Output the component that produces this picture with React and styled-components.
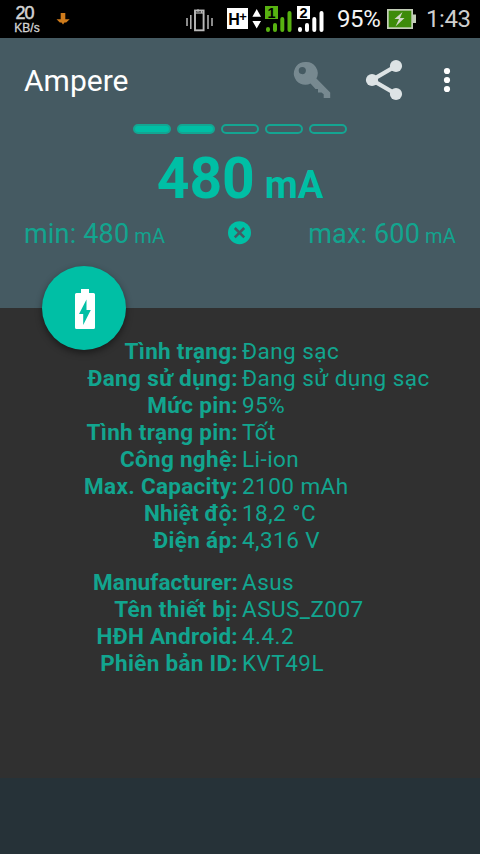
import React from 'react';
import styled, {createGlobalStyle} from 'styled-components';

const colors = {
  header: '#455a62',
  body: '#303030',
  footer: '#263238',
  accent: '#00bfa5',
  text: '#12a58f',
  light: '#fefefe',
};

const GlobalStyle = createGlobalStyle`
  body {
    margin: 0;
    background: ${colors.body};
    font-family: Roboto, 'Noto Sans', sans-serif;
  }

  svg {
    display: block;
    flex: none;
  }
`;

const Screen = styled.div`
  display: flex;
  flex-direction: column;
  width: 480px;
  height: 854px;
  overflow: hidden;
`;

const StatusBar = styled.div`
  display: flex;
  align-items: flex-start;
  height: 38px;
  background: #000;
`;

const Speed = styled.div`
  width: 44px;
  margin-left: 5px;
  padding-top: 3px;
  text-align: center;
  font-family: 'Liberation Sans', sans-serif;
  color: #d4d4d4;
`;

const SpeedValue = styled.div`
  height: 19px;
  padding-right: 5px;
  font-size: 18px;
  line-height: 20px;
  letter-spacing: -1px;
  -webkit-text-stroke: 0.5px #d4d4d4;
`;

const SpeedUnit = styled.div`
  font-size: 12px;
  line-height: 13px;
  -webkit-text-stroke: 0.3px #d4d4d4;
`;

const StatusIcon = styled.svg`
  margin-left: ${props => props.$gap}px;
`;

const StatusText = styled.div`
  margin-left: ${props => props.$gap}px;
  width: ${props => props.$width}px;
  font-size: 24px;
  line-height: 38px;
  letter-spacing: -0.4px;
  white-space: nowrap;
  color: ${props => props.$color};
`;

const Header = styled.header`
  position: relative;
  height: 270px;
  background: ${colors.header};
`;

const Toolbar = styled.div`
  display: flex;
  align-items: center;
  height: 84px;
  padding-left: 24px;
`;

const Title = styled.h1`
  flex: 1;
  margin: 0;
  font-size: 30px;
  font-weight: 400;
  color: ${colors.light};
`;

const Levels = styled.div`
  display: flex;
  justify-content: center;
  gap: 6px;
  padding-top: 2px;
`;

const Level = styled.div`
  box-sizing: border-box;
  width: 38px;
  height: 10px;
  border: 2px solid #14a592;
  border-radius: 5px;
  background: ${props => (props.$on ? colors.accent : 'transparent')};
`;

const Current = styled.div`
  height: 87px;
  text-align: center;
  font-size: 57px;
  font-weight: 700;
  line-height: 90px;
  color: ${colors.accent};
`;

const CurrentUnit = styled.span`
  margin-left: 10px;
  font-size: 38px;
`;

const Range = styled.div`
  display: flex;
  justify-content: space-between;
  align-items: flex-start;
  height: 26px;
  padding: 0 24px;
`;

const Limit = styled.div`
  width: 148px;
  text-align: ${props => props.$align};
  font-size: 27px;
  line-height: 26px;
  letter-spacing: 0.17px;
  white-space: nowrap;
  color: ${colors.text};
`;

const LimitUnit = styled.span`
  margin-left: 5px;
  font-size: 20px;
`;

const Fab = styled.div`
  position: absolute;
  left: 42px;
  bottom: -42px;
  display: flex;
  justify-content: center;
  align-items: center;
  box-sizing: border-box;
  width: 84px;
  height: 84px;
  padding: 2px 0 0 2px;
  border-radius: 50%;
  background: ${colors.accent};
  box-shadow: 0 3px 7px rgba(0, 0, 0, 0.45);
`;

const Details = styled.main`
  flex: 1;
  padding-top: 30px;
  background: ${colors.body};
`;

const Group = styled.div`
  margin-bottom: 15px;
`;

const Row = styled.div`
  display: flex;
  height: 27px;
  font-size: 22.5px;
  line-height: 27px;
  white-space: nowrap;
  color: ${colors.text};
`;

const Label = styled.div`
  width: 238px;
  margin-right: 4px;
  text-align: right;
  font-weight: 700;
  letter-spacing: ${props => props.$spacing}px;
`;

const Value = styled.div`
  letter-spacing: 0.45px;
`;

const Footer = styled.footer`
  height: 76px;
  background: ${colors.footer};
`;

const battery = [
  ['Tình trạng:', 'Đang sạc'],
  ['Đang sử dụng:', 'Đang sử dụng sạc', 0.36],
  ['Mức pin:', '95%'],
  ['Tình trạng pin:', 'Tốt'],
  ['Công nghệ:', 'Li-ion'],
  ['Max. Capacity:', '2100 mAh'],
  ['Nhiệt độ:', '18,2 °C', 0.1],
  ['Điện áp:', '4,316 V'],
];

const device = [
  ['Manufacturer:', 'Asus', 0.1],
  ['Tên thiết bị:', 'ASUS_Z007'],
  ['HĐH Android:', '4.4.2'],
  ['Phiên bản ID:', 'KVT49L'],
];

const Signal = ({sim, color, gap}) => (
  <StatusIcon $gap={gap} width="28" height="38" viewBox="0 0 28 38">
    <rect x="0" y="6" width="13" height="13" fill={color} />
    <text x="6.5" y="17.5" textAnchor="middle" fontFamily="Liberation Sans" fontWeight="700" fontSize="14.5" fill="#000">
      {sim}
    </text>
    <g stroke={color} strokeWidth="4" strokeLinecap="round">
      <path d="M3 29v1M10 25v5M17.3 19v11M24.5 13v17" />
    </g>
  </StatusIcon>
);

const Status = () => (
  <StatusBar>
    <Speed>
      <SpeedValue>20</SpeedValue>
      <SpeedUnit>KB/s</SpeedUnit>
    </Speed>
    <StatusIcon $gap={7} width="14" height="38" viewBox="56 0 14 38">
      <path d="M60.700 13h4.600v6.200h4.400l-3.500 3.300h-1.700l-1.500 2-1.500-2h-1.700l-3.300-3.300h4.200z" fill="#cf7b1b" />
    </StatusIcon>
    <StatusIcon $gap={115} width="28" height="38" viewBox="185 0 28 38">
      <g fill="none" stroke="#b9b9b9">
        <rect x="195" y="10.500" width="8.600" height="19.800" strokeWidth="1.900" />
        <path d="M195 13h9" strokeWidth="1.200" />
        <path d="M198 9v3M201.500 10v3" strokeWidth="1" />
        <path d="M187 18v8M190.800 15v14M208 15v14M212 18v8" strokeWidth="1.500" />
      </g>
    </StatusIcon>
    <StatusIcon $gap={14} width="35" height="38" viewBox="227 0 35 38">
      <rect x="227" y="8" width="21" height="21" fill="#fff" />
      <text x="228.300" y="25" fontFamily="Liberation Sans" fontWeight="700" fontSize="16" fill="#000">
        H
      </text>
      <text x="239.300" y="21" fontFamily="Liberation Sans" fontWeight="700" fontSize="13" fill="#000">
        +
      </text>
      <path d="M256.700 9l4.300 7.800h-8.600zM256.700 28.500l4.300-7.500h-8.600z" fill="#fff" />
    </StatusIcon>
    <Signal sim="1" color="#58b211" gap={3} />
    <Signal sim="2" color="#ffffff" gap={4} />
    <StatusText $gap={12} $width={50} $color="#f4f4f4">95%</StatusText>
    <StatusIcon $gap={0} width="30" height="38" viewBox="387 0 30 38">
      <path d="M387 9h26v5.500h3v8.500h-3v6h-26z" fill="#c3cdb8" />
      <path d="M388.700 10.700h22.600v16.600h-22.600z" fill="#3d8b0a" />
      <path d="M402.500 12l-8 7h4.500l-3.500 7.500 9-8.500h-4.500z" fill="#d0d6c8" />
    </StatusIcon>
    <StatusText $gap={9} $width={48} $color="#cfcfcf">1:43</StatusText>
  </StatusBar>
);

const ToolbarIcons = () => (
  <>
    <svg width="42" height="60" viewBox="290 50 42 60">
      <path
        d="M305.300 62a11.400 11.400 0 1 0 5.200 21.500l5 5.500h2.500v3.500h3.500l2.200 1.700v3.800h6.500v-5.500l-13.800-13.900A11.400 11.400 0 0 0 305.300 62zM302.300 67a3.600 3.600 0 1 1 0 7.200 3.600 3.600 0 0 1 0-7.200z"
        fill="#778990"
        fillRule="evenodd"
      />
    </svg>
    <svg width="84" height="60" viewBox="332 50 84 60">
      <path d="M396 66l-24 14 24 14" fill="none" stroke="#dde3e5" strokeWidth="4.300" />
      <g fill="#dde3e5">
        <circle cx="396" cy="66" r="6.100" />
        <circle cx="372" cy="80" r="6.100" />
        <circle cx="396" cy="94" r="6.100" />
      </g>
    </svg>
    <svg width="64" height="60" viewBox="416 50 64 60" fill="#fff">
      <circle cx="447" cy="71" r="3.100" />
      <circle cx="447" cy="80" r="3.100" />
      <circle cx="447" cy="89" r="3.100" />
    </svg>
  </>
);

const List = ({items}) => (
  <Group>
    {items.map(([label, value, spacing = 0.3]) => (
      <Row key={label}>
        <Label $spacing={spacing}>{label}</Label>
        <Value>{value}</Value>
      </Row>
    ))}
  </Group>
);

const App = () => {
  return (
    <Screen>
      <GlobalStyle />
      <Status />
      <Header>
        <Toolbar>
          <Title>Ampere</Title>
          <ToolbarIcons />
        </Toolbar>
        <Levels>
          {[1, 2, 3, 4, 5].map(level => (
            <Level key={level} $on={level <= 2} />
          ))}
        </Levels>
        <Current>
          480<CurrentUnit>mA</CurrentUnit>
        </Current>
        <Range>
          <Limit $align="left">
            min: 480<LimitUnit>mA</LimitUnit>
          </Limit>
          <svg width="24" height="24" viewBox="0 0 24 24">
            <circle cx="11.500" cy="11.700" r="11.500" fill={colors.accent} />
            <path d="M6.800 7l9.400 9.400M16.200 7l-9.400 9.400" stroke={colors.header} strokeWidth="2.500" />
          </svg>
          <Limit $align="right">
            max: 600<LimitUnit>mA</LimitUnit>
          </Limit>
        </Range>
        <Fab>
          <svg width="20" height="40" viewBox="0 0 20 40">
            <path
              d="M6 0h8v4h4.500q1.500 0 1.500 1.500v33q0 1.500-1.500 1.500h-17q-1.500 0-1.500-1.500v-33q0-1.500 1.500-1.500h4.500zM11.500 10.500l-7.500 14.500h4.200v11l7.600-15h-4.300z"
              fill="#fff"
              fillRule="evenodd"
            />
          </svg>
        </Fab>
      </Header>
      <Details>
        <List items={battery} />
        <List items={device} />
      </Details>
      <Footer />
    </Screen>
  );
};

export default App;
